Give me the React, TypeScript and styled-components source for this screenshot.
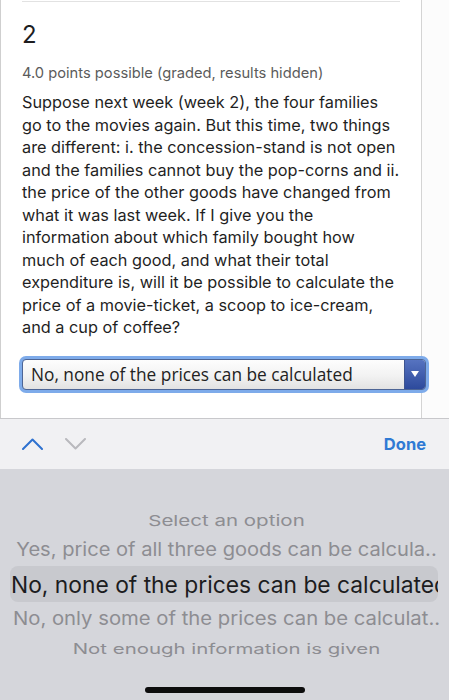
import styled, { createGlobalStyle } from 'styled-components';

const GlobalStyle = createGlobalStyle`
  html, body {
    margin: 0;
    padding: 0;
    background: #ffffff;
  }
  body {
    font-family: Inter, "Liberation Sans", Arial, sans-serif;
    -webkit-font-smoothing: antialiased;
  }
`;

const Screen = styled.div`
  width: 449px;
  height: 700px;
  display: flex;
  flex-direction: column;
  overflow: hidden;
`;

const PageArea = styled.div`
  height: 418px;
  display: flex;
  background: #fcfcfc;
`;

const Card = styled.section`
  width: 422px;
  box-sizing: border-box;
  border-left: 1px solid #cfcfcf;
  border-right: 1px solid #d4d4d4;
  background: #ffffff;
  padding: 0 0 0 21px;
`;

const Rule = styled.div`
  width: 378px;
  height: 1px;
  margin-top: 1px;
  background: #e2e2e2;
`;

const Number = styled.h2`
  margin: 18px 0 0;
  font-size: 24px;
  line-height: 30px;
  font-weight: 400;
  color: #1d1d1f;
`;

const Points = styled.div`
  margin-top: 13px;
  font-size: 14.7px;
  line-height: 20px;
  color: #5b5b5b;
`;

const Question = styled.p`
  margin: 8px 0 0;
  font-size: 16.3px;
  line-height: 22.5px;
  color: #1f1f1f;
  white-space: nowrap;
`;

const SelectRing = styled.div`
  margin: 17px 0 0 -3px;
  width: 410px;
  height: 37px;
  box-sizing: border-box;
  padding: 3px;
  border-radius: 7px;
  background: #7eabea;
`;

const SelectBox = styled.div`
  height: 31px;
  display: flex;
  box-sizing: border-box;
  border: 1px solid #4d6595;
  border-radius: 4px;
  overflow: hidden;
  background: linear-gradient(#fdfdfd, #f2f2f2 55%, #e2e2e2);
`;

const SelectValue = styled.div`
  flex: 1;
  padding-left: 8px;
  font-family: "Open Sans", "DejaVu Sans", sans-serif;
  font-size: 17.3px;
  line-height: 29px;
  color: #222;
  white-space: nowrap;
`;

const SelectArrow = styled.div`
  width: 20px;
  display: flex;
  align-items: center;
  justify-content: center;
  background: linear-gradient(#5673c0, #2d4a9c);
  border-left: 1px solid #3d5490;
`;

const Accessory = styled.div`
  height: 51px;
  box-sizing: border-box;
  border-top: 1px solid #c8c8cb;
  background: #f1f1f3;
  display: flex;
  align-items: center;
  padding: 0 23px 0 22px;
`;

const Chevrons = styled.div`
  display: flex;
  gap: 22px;
  flex: 1;
`;

const DoneButton = styled.span`
  font-size: 16.5px;
  font-weight: 700;
  color: #2f7ad4;
`;

const Picker = styled.div`
  flex: 1;
  background: #d5d6db;
  display: flex;
  flex-direction: column;
  padding-top: 37px;
`;

const Option = styled.div<{ $size: number; $squash: number; $h: number }>`
  height: ${p => p.$h}px;
  display: flex;
  align-items: center;
  justify-content: center;
  padding-left: 4px;
  font-size: ${p => p.$size}px;
  color: #8d8d92;
  white-space: nowrap;
  transform: scaleY(${p => p.$squash});
`;

const SelectedOption = styled.div`
  height: 36px;
  margin: 0 11px 0 10px;
  border-radius: 8px;
  background: #c8c9ce;
  display: flex;
  align-items: center;
  padding-left: 1px;
  overflow: hidden;
  white-space: nowrap;
  font-size: 22.8px;
  color: #1c1c1e;
`;

const HomeBar = styled.div`
  width: 160px;
  height: 6px;
  border-radius: 3px;
  background: #0d0d0d;
  margin: 26px auto 0;
`;

const lines = [
  'Suppose next week (week 2), the four families',
  'go to the movies again. But this time, two things',
  'are different: i. the concession-stand is not open',
  'and the families cannot buy the pop-corns and ii.',
  'the price of the other goods have changed from',
  'what it was last week. If I give you the',
  'information about which family bought how',
  'much of each good, and what their total',
  'expenditure is, will it be possible to calculate the',
  'price of a movie-ticket, a scoop to ice-cream,',
  'and a cup of coffee?',
];

const App = () => {
  return (
    <Screen>
      <GlobalStyle />
      <PageArea>
        <Card>
          <Rule />
          <Number>2</Number>
          <Points>4.0 points possible (graded, results hidden)</Points>
          <Question>
            {lines.map((l, i) => (
              <span key={i}>
                {l}
                {i < lines.length - 1 && <br />}
              </span>
            ))}
          </Question>
          <SelectRing>
            <SelectBox>
              <SelectValue>No, none of the prices can be calculated</SelectValue>
              <SelectArrow>
                <svg width="8" height="6" viewBox="0 0 8 6">
                  <path d="M0 0 H8 L4 6 Z" fill="#ffffff" />
                </svg>
              </SelectArrow>
            </SelectBox>
          </SelectRing>
        </Card>
      </PageArea>
      <Accessory>
        <Chevrons>
          <svg width="21" height="12" viewBox="0 0 21 12">
            <path d="M1 11 L10.5 1.5 L20 11" fill="none" stroke="#2f72cf" strokeWidth="2" strokeLinecap="round" strokeLinejoin="round" />
          </svg>
          <svg width="21" height="12" viewBox="0 0 21 12">
            <path d="M1 1 L10.5 10.5 L20 1" fill="none" stroke="#b9b9bd" strokeWidth="2" strokeLinecap="round" strokeLinejoin="round" />
          </svg>
        </Chevrons>
        <DoneButton>Done</DoneButton>
      </Accessory>
      <Picker>
        <Option $size={20.5} $squash={0.72} $h={28}>Select an option</Option>
        <Option $size={20.1} $squash={0.92} $h={32}>Yes, price of all three goods can be calcula..</Option>
        <SelectedOption>No, none of the prices can be calculated</SelectedOption>
        <Option $size={20.3} $squash={0.92} $h={33}>No, only some of the prices can be calculat..</Option>
        <Option $size={20.4} $squash={0.72} $h={26}>Not enough information is given</Option>
        <HomeBar />
      </Picker>
    </Screen>
  );
};

export default App;
